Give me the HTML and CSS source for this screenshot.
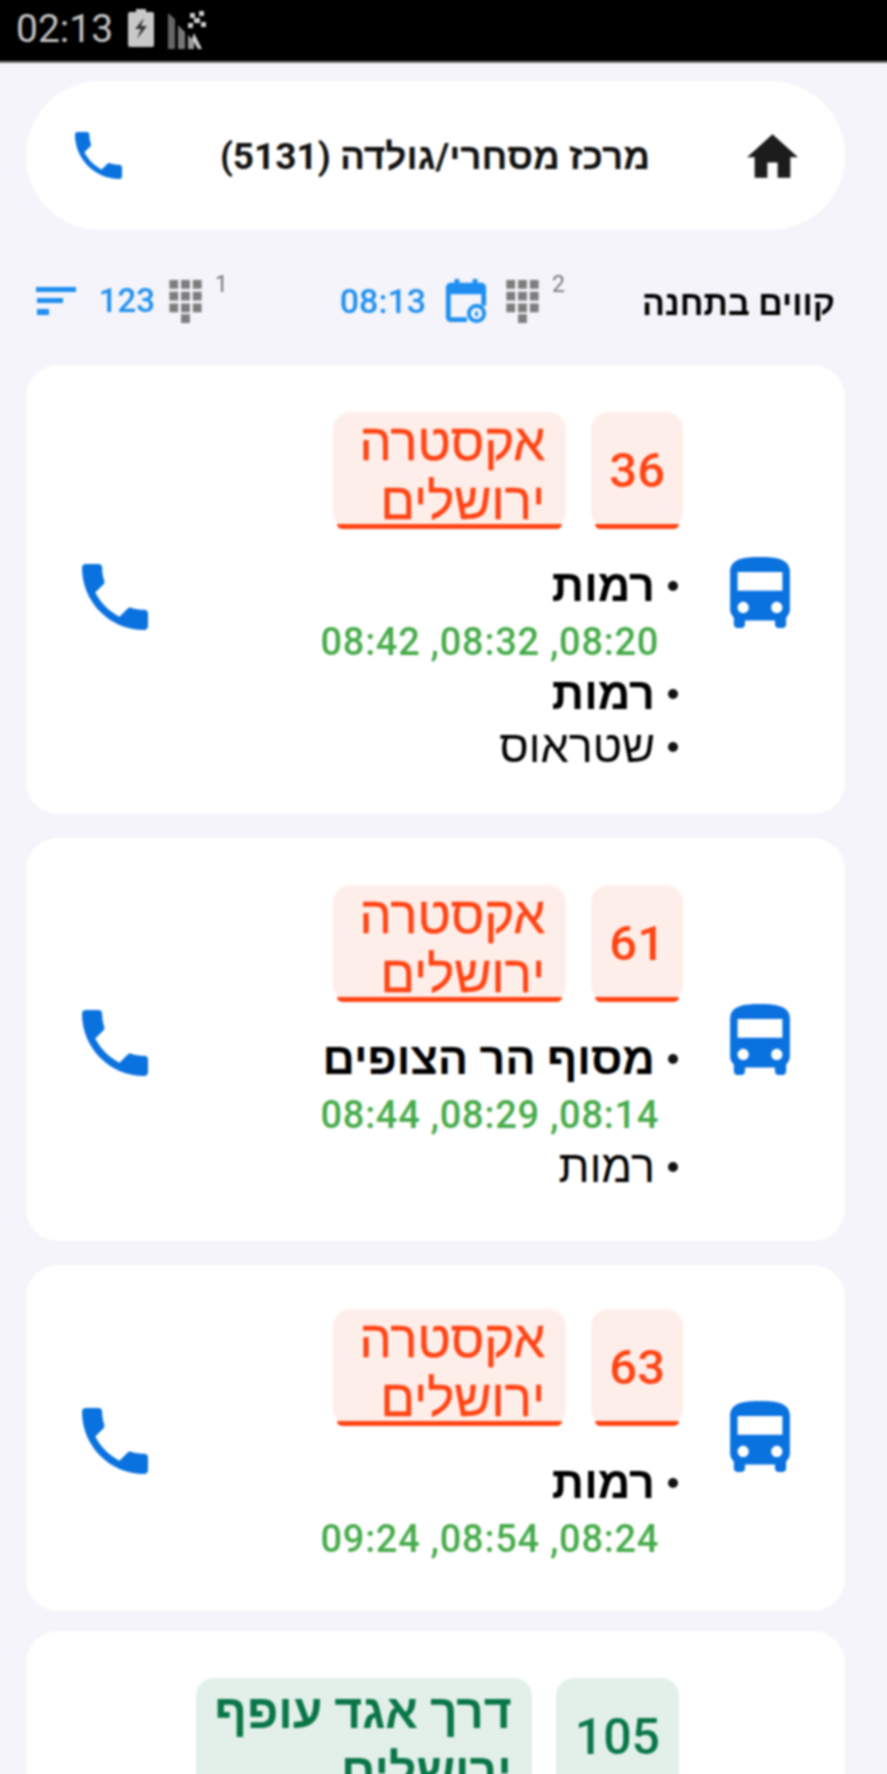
FILE: index.html
```html
<!DOCTYPE html>
<html lang="he" dir="rtl">
<head>
<meta charset="utf-8">
<title>קווים בתחנה</title>
<link rel="stylesheet" href="styles.css">
</head>
<body>
<svg class="defs" width="0" height="0" aria-hidden="true">
  <symbol id="i-call" viewBox="3 3 18 18"><path d="M6.62 10.79c1.44 2.83 3.76 5.14 6.59 6.59l2.2-2.2c.27-.27.67-.36 1.02-.24 1.12.37 2.33.57 3.57.57.55 0 1 .45 1 1V20c0 .55-.45 1-1 1-9.39 0-17-7.61-17-17 0-.55.45-1 1-1h3.5c.55 0 1 .45 1 1 0 1.25.2 2.45.57 3.57.11.35.03.74-.25 1.02l-2.2 2.2z"/></symbol>
  <symbol id="i-bus" viewBox="4 2 16 19"><path d="M4 16c0 .88.39 1.67 1 2.22V20c0 .55.45 1 1 1h1c.55 0 1-.45 1-1v-1h8v1c0 .55.45 1 1 1h1c.55 0 1-.45 1-1v-1.78c.61-.55 1-1.34 1-2.22V6c0-3.5-3.58-4-8-4s-8 .5-8 4v10zm3.5 1c-.83 0-1.5-.67-1.5-1.5S6.67 14 7.5 14s1.5.67 1.5 1.5S8.33 17 7.5 17zm9 0c-.83 0-1.5-.67-1.5-1.5s.67-1.5 1.5-1.5 1.5.67 1.5 1.5-.67 1.5-1.5 1.5zm1.5-6H6V6h12v5z"/></symbol>
  <symbol id="i-home" viewBox="2 3 20 17"><path d="M10 20v-6h4v6h5v-8h3L12 3 2 12h3v8z"/></symbol>
  <symbol id="i-keypad" viewBox="0 0 33 44">
    <path d="M0 0h9v9H0zM12 0h9v9h-9zM24 0h9v9h-9zM0 12h9v9H0zM12 12h9v9h-9zM24 12h9v9h-9zM0 24h9v9H0zM12 24h9v9h-9zM24 24h9v9h-9zM12 35h9v9h-9z"/>
  </symbol>
</svg>

<div class="screen">
  <div class="statusbar">
    <span class="clock">02:13</span>
    <svg class="battery" viewBox="0 0 26 38"><path class="batt" d="M8 0h10v3h6a2 2 0 0 1 2 2v31a2 2 0 0 1-2 2H2a2 2 0 0 1-2-2V5a2 2 0 0 1 2-2h6z"/><path class="bolt" d="M16 9 7 20h6l-4 10 10-13h-6l3-8z"/></svg>
    <svg class="signal" viewBox="0 0 38 38"><path class="bar1" d="M0 2l7 6v30H0z"/><path class="bar2" d="M10 14l7 7v17h-7z"/><path class="bar3" d="M20 24l6 6v8h-6z"/><path class="bar4" d="M26 22l8 16h-4l-6-10z"/><path class="bar4" d="M22 2h5v5h-5zM31 0h5v5h-5zM26 7h6v5h-6zM20 12h5v5h-5zM33 11h5v5h-5z"/></svg>
  </div>

  <main class="page">
    <header class="topcard">
      <svg class="home"><use href="#i-home"/></svg>
      <h1 class="station">מרכז מסחרי/גולדה (5131)</h1>
      <svg class="topcall"><use href="#i-call"/></svg>
    </header>

    <section class="toolbar">
      <h2 class="toolbar-title">קווים בתחנה</h2>
      <div class="tool time-tool">
        <sup class="count">2</sup>
        <svg class="keypad"><use href="#i-keypad"/></svg>
        <svg class="calendar" viewBox="0 0 42 46"><path d="M9 0h5v4h14V0h5v4h4a5 5 0 0 1 5 5v19h-5V16H5v24h17v5H5a5 5 0 0 1-5-5V9a5 5 0 0 1 5-5h4z"/><path fill-rule="evenodd" d="M32 26a10 10 0 1 1 0 20 10 10 0 0 1 0-20zm0 4a6 6 0 1 0 0 12 6 6 0 0 0 0-12zm-1.500 4h3v5h-3z"/></svg>
        <span class="tool-value">08:13</span>
      </div>
      <div class="tool line-tool">
        <sup class="count">1</sup>
        <svg class="keypad"><use href="#i-keypad"/></svg>
        <span class="tool-value">123</span>
        <svg class="sort" viewBox="0 0 40 28"><path d="M0 0h40v5H0zM1 11h26v5H1zM1 22h12v6H1z"/></svg>
      </div>
    </section>

    <article class="card">
      <svg class="bus"><use href="#i-bus"/></svg>
      <div class="card-body">
        <div class="badges red">
          <span class="badge num">36</span>
          <span class="badge name">אקסטרה<br>ירושלים</span>
        </div>
        <ul class="stops">
          <li class="stop active">רמות<div class="times">08:20, 08:32, 08:42</div></li>
          <li class="stop active">רמות</li>
          <li class="stop">שטראוס</li>
        </ul>
      </div>
      <svg class="call"><use href="#i-call"/></svg>
    </article>

    <article class="card card-two">
      <svg class="bus"><use href="#i-bus"/></svg>
      <div class="card-body">
        <div class="badges red">
          <span class="badge num">61</span>
          <span class="badge name">אקסטרה<br>ירושלים</span>
        </div>
        <ul class="stops">
          <li class="stop active">מסוף הר הצופים<div class="times">08:14, 08:29, 08:44</div></li>
          <li class="stop">רמות</li>
        </ul>
      </div>
      <svg class="call"><use href="#i-call"/></svg>
    </article>

    <article class="card card-one">
      <svg class="bus"><use href="#i-bus"/></svg>
      <div class="card-body">
        <div class="badges red">
          <span class="badge num">63</span>
          <span class="badge name">אקסטרה<br>ירושלים</span>
        </div>
        <ul class="stops">
          <li class="stop active">רמות<div class="times">08:24, 08:54, 09:24</div></li>
        </ul>
      </div>
      <svg class="call"><use href="#i-call"/></svg>
    </article>

    <article class="card card-cut">
      <div class="card-body">
        <div class="badges green">
          <span class="badge num">105</span>
          <span class="badge name">דרך אגד עופף<br>ירושלים</span>
        </div>
      </div>
    </article>
  </main>
</div>
</body>
</html>
```
FILE: styles.css
```css
* { box-sizing: border-box; }
html, body { margin: 0; padding: 0; height: 1774px; overflow: hidden; background: #f4f4fa; }
body { font-family: Roboto, "Liberation Sans", Arial, sans-serif; color: #111; }
.defs { position: absolute; }

/* the reference is a soft, upscaled capture; the bleed keeps the blur off the window edges */
.screen {
  margin: -6px;
  height: 1786px;
  overflow: hidden;
  display: flex;
  flex-direction: column;
  filter: blur(.8px);
}

.statusbar {
  direction: ltr;
  flex: none;
  height: 69px;
  background: #000;
  border-bottom: 2px solid #777;
  display: flex;
  align-items: flex-start;
  padding: 15px 0 0 22px;
  color: #c4c4c4;
}
.clock { font-size: 39px; line-height: 40px; font-weight: 400; width: 112px; flex: none; }
.battery { width: 26px; height: 38px; }
.batt { fill: #c8c8c8; }
.bolt { fill: #333; }
.signal { width: 38px; height: 38px; margin: 2px 0 0 14px; }
.bar1 { fill: #666; } .bar2 { fill: #777; } .bar3 { fill: #999; } .bar4 { fill: #ccc; }

.page { flex: 1; padding: 18px 48px 0 32px; display: flex; flex-direction: column; }

.topcard {
  flex: none;
  height: 149px;
  background: #fff;
  border-radius: 74px;
  display: flex;
  align-items: center;
  justify-content: space-between;
  padding: 0 47px 0 48px;
}
.home { width: 51px; height: 48px; fill: #1c1c1c; }
.station { margin: 0; padding-top: 3px; font-size: 37px; font-weight: 700; line-height: 44px; color: #111; white-space: nowrap; }
.topcall { width: 49px; height: 47px; fill: #0a72df; }

.toolbar {
  flex: none;
  height: 135px;
  display: flex;
  align-items: center;
  padding: 7px 10px 0 8px;
}
.toolbar-title { margin: 0 0 0 82px; padding-top: 3px; font-size: 34px; font-weight: 700; line-height: 44px; color: #000; width: 188px; white-space: nowrap; }
.tool { display: flex; align-items: center; color: #1e8ff0; flex: none; }
.time-tool { width: 223px; margin-left: 114px; }
.line-tool { width: 194px; }
.count { font-size: 23px; line-height: 24px; color: #777; margin: -32px 0 0 13px; width: 13px; text-align: center; vertical-align: baseline; }
.keypad { width: 33px; height: 43px; fill: #7d7d7d; flex: none; }
.calendar { width: 42px; height: 44px; fill: #1e8ff0; margin: 0 19px; flex: none; }
.tool-value { font-size: 34px; line-height: 40px; font-weight: 500; }
.line-tool .keypad { margin-left: 14px; }
.line-tool .tool-value { margin-left: 23px; font-size: 33px; }
.sort { width: 40px; height: 28px; fill: #1e8ff0; flex: none; }

.card {
  flex: none;
  background: #fff;
  border-radius: 32px;
  margin-bottom: 24px;
  display: flex;
  align-items: center;
  padding: 47px 55px 41px 56px;
}
.card-two { padding-bottom: 48px; }
.card-one { padding-top: 44px; padding-bottom: 47px; margin-bottom: 20px; }
.card-cut { padding-right: 166px; }
.bus { flex: none; width: 60px; height: 71px; fill: #0a72df; margin-left: 47px; }
.call { flex: none; width: 66px; height: 66px; fill: #0a72df; margin-top: 8px; }
.card-body { flex: 1; }

.badges { display: flex; gap: 25px; align-items: stretch; }
.green { gap: 24px; }
.badge {
  display: flex;
  align-items: center;
  height: 117px;
  border-radius: 18px;
  position: relative;
}
.badge::after {
  content: "";
  position: absolute;
  left: 4px;
  right: 4px;
  bottom: 0;
  height: 5px;
  border-radius: 0 0 14px 14px;
  background: currentColor;
}
.num { font-size: 49px; padding: 0 18px; font-weight: 500; }
.name { font-size: 51px; line-height: 59px; padding: 2px 21px 0 26px; -webkit-text-stroke: .4px currentColor; }
.red .badge { background: #feeee9; color: #ff4414; }
.green .badge { background: #e3f0ea; color: #0a7648; font-weight: 500; }
.green .badge::after { display: none; }
.green .num { font-size: 50px; padding: 0 19px; font-weight: 500; }
.green .name { font-weight: 700; font-size: 48px; padding: 4px 20px 0 19px; align-items: flex-start; -webkit-text-stroke: 0; }

.stops { list-style: none; margin: 30px 0 0; padding: 0; }
.stop {
  font-size: 45px;
  line-height: 53px;
  padding-right: 28px;
  position: relative;
  color: #000;
}
.stop::before {
  content: "";
  position: absolute;
  right: 5px;
  top: 22px;
  width: 10px;
  height: 10px;
  border-radius: 50%;
  background: #111;
}
.stop.active { font-weight: 700; }
.times { font-size: 38px; line-height: 49px; padding-top: 6px; color: #47ab4b; font-weight: 500; margin-right: -4px; letter-spacing: .7px; }
```
